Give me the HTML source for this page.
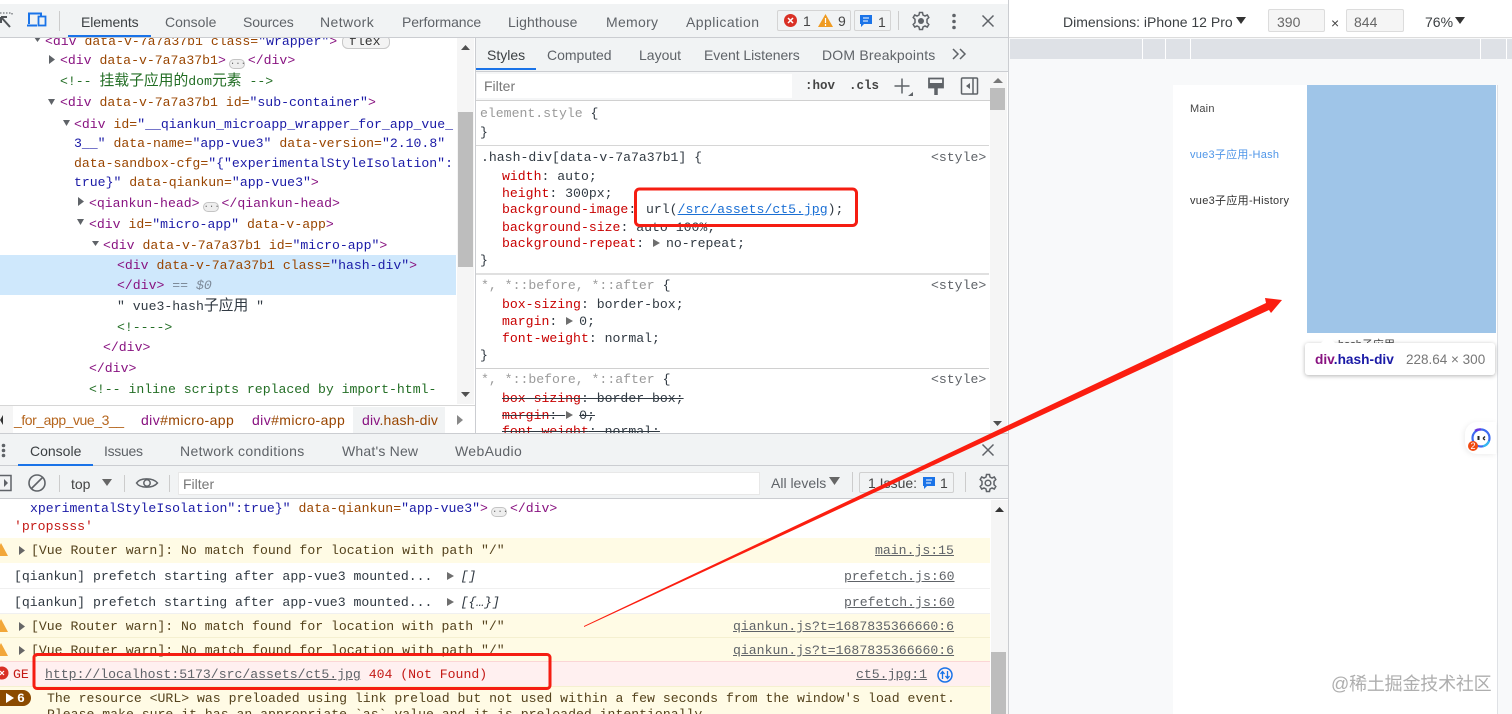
<!DOCTYPE html>
<html><head><meta charset="utf-8"><style>
html,body{margin:0;padding:0;width:1512px;height:714px;overflow:hidden;background:#fff}
#r{position:relative;width:1512px;height:714px;overflow:hidden;background:#fff;font-family:"Liberation Sans","Noto Sans CJK SC",sans-serif;filter:blur(.35px)}
.b{position:absolute}
.m,.s{position:absolute;white-space:pre;line-height:18px;height:18px}
.m{font-family:"Liberation Mono","Noto Sans CJK SC",monospace;font-size:13.17px;color:#303942;margin-top:1px}
.s{font-size:14px;color:#5f6368}
.c{font-size:14.8px;line-height:14px}
.t{color:#881280}.a{color:#994500}.v{color:#1a1aa6}.g{color:#236e25}
.p{color:#c80000}.k{color:#9a9a9a}.l{color:#5f6368;text-decoration:underline}
.x{text-decoration:line-through}
.ar{display:inline-block;width:0;height:0;border-left:7px solid #6e6e6e;border-top:4px solid transparent;border-bottom:4px solid transparent;margin:0 6px 0 1px}
svg{position:absolute;overflow:visible}
.e{display:inline-block;width:14px;height:8px;border:1px solid #c4c4c4;border-radius:5px;background:#eee;vertical-align:0;text-align:center;line-height:4px;font-size:9px;color:#666;margin:0 3px}
.w{color:#54421c}
</style></head><body><div id="r">

<!-- panel backgrounds -->
<div class="b" style="left:0;top:4px;width:1008px;height:33px;background:#f1f3f4;border-bottom:1px solid #cbcdd1"></div>
<div class="b" style="left:476px;top:38px;width:532px;height:33px;background:#f1f3f4;border-bottom:1px solid #cbcdd1"></div>
<div class="b" style="left:1008px;top:0;width:1px;height:714px;background:#cbcdd1"></div>
<div class="b" style="left:475px;top:38px;width:1px;height:396px;background:#cbcdd1"></div>
<div class="b" style="left:0;top:255px;width:456px;height:40px;background:#cfe8fc"></div>
<div class="b" style="left:457px;top:38px;width:17px;height:366px;background:#f5f5f5"></div>
<div class="b" style="left:458px;top:112px;width:15px;height:155px;background:#bdbdbd"></div>
<svg style="left:0;top:0" width="1512" height="714">
<polygon points="461,50 470,50 465.500,45" fill="#505050"/><polygon points="461,392 470,392 465.500,397" fill="#505050"/>
</svg>

<!-- top toolbar -->
<svg style="left:0;top:8px" width="50" height="24" fill="none">
<path d="M0 5H11M12 5V8" stroke="#6e7276" stroke-dasharray="1.500 1.500" stroke-width="1.300"/>
<path d="M1 9L10 19M1 9H7M1 9V15" stroke="#505458" stroke-width="2"/>
<path d="M29 16V5.500H41V8M27 17.500H37" stroke="#1a73e8" stroke-width="2"/>
<rect x="38.500" y="8.500" width="7" height="9" stroke="#1a73e8" stroke-width="1.800"/>
</svg>
<div class="b" style="left:59px;top:11px;width:1px;height:20px;background:#ccc"></div>
<div class="b" style="left:68px;top:35px;width:83px;height:2px;background:#1a73e8"></div>
<div class="s" style="left:81px;top:13px;color:#3c4043;letter-spacing:-.1px">Elements</div>
<div class="s" style="left:165px;top:13px">Console</div>
<div class="s" style="left:243px;top:13px;letter-spacing:-.1px">Sources</div>
<div class="s" style="left:320px;top:13px;letter-spacing:.4px">Network</div>
<div class="s" style="left:402px;top:13px;letter-spacing:-.1px">Performance</div>
<div class="s" style="left:508px;top:13px;letter-spacing:.1px">Lighthouse</div>
<div class="s" style="left:606px;top:13px;letter-spacing:.3px">Memory</div>
<div class="s" style="left:686px;top:13px;letter-spacing:.45px">Application</div>
<div class="b" style="left:777px;top:10px;width:72px;height:19px;border:1px solid #d4d4d4;border-radius:2px"></div>
<div class="b" style="left:854px;top:10px;width:35px;height:19px;border:1px solid #d4d4d4;border-radius:2px"></div>
<div class="b" style="left:784px;top:14px;width:13px;height:13px;border-radius:50%;background:#d93025"></div>
<svg style="left:784px;top:14px" width="13" height="13"><path d="M4 4L9 9M9 4L4 9" stroke="#fff" stroke-width="1.500"/></svg>
<div class="s" style="left:803px;top:12px;color:#444">1</div>
<svg style="left:818px;top:14px" width="15" height="13"><polygon points="7.500,0 15,13 0,13" fill="#ef9b22"/><path d="M7.500 4V9M7.500 10V12" stroke="#fff" stroke-width="1.200"/></svg>
<div class="s" style="left:838px;top:12px;color:#444">9</div>
<svg style="left:860px;top:15px" width="13" height="13"><path d="M0 0H12V9H4L1 12V9H0Z" fill="#1a73e8"/><path d="M3 3H9M3 6H8" stroke="#fff" stroke-width="1"/></svg>
<div class="s" style="left:878px;top:13px;color:#444">1</div>
<div class="b" style="left:898px;top:11px;width:1px;height:19px;background:#ccc"></div>
<svg style="left:911px;top:11px" width="20" height="20" fill="none"><path d="M8.500 1.500H11.500L12 4L14 5L16.300 4L17.800 6.500L16 8.300V11.700L17.800 13.500L16.300 16L14 15L12 16L11.500 18.500H8.500L8 16L6 15L3.700 16L2.200 13.500L4 11.700V8.300L2.200 6.500L3.700 4L6 5L8 4Z" stroke="#5f6368" stroke-width="1.500"/><circle cx="10" cy="10" r="3" fill="#5f6368"/></svg>
<svg style="left:950px;top:13px" width="8" height="18" fill="#5f6368"><circle cx="4" cy="2.500" r="1.800"/><circle cx="4" cy="8.500" r="1.800"/><circle cx="4" cy="14.500" r="1.800"/></svg>
<svg style="left:982px;top:15px" width="12" height="12"><path d="M0.500 0.500L11.500 11.500M11.500 0.500L0.500 11.500" stroke="#5f6368" stroke-width="1.500"/></svg>

<!-- DOM tree -->
<div class="b" style="left:0;top:38px;width:456px;height:366px;overflow:hidden">
<div style="position:absolute;left:0;top:-38px;width:456px;height:450px">
<svg style="left:0;top:0" width="120" height="300" fill="#5f6368">
<polygon points="34,37 41,37 37.500,42"/><polygon points="49,55 49,64 55,59.500"/><polygon points="48,99 55,99 51.500,105"/><polygon points="63,120 70,120 66.500,126"/><polygon points="78,197 78,206 84,201.500"/><polygon points="77,219 84,219 80.500,225"/><polygon points="92,241 99,241 95.500,246"/>
</svg>
<div class="m" style="left:45px;top:32px"><span class="t">&lt;div</span> <span class="a">data-v-7a7a37b1 class=</span><span class="v">"wrapper"</span><span class="t">&gt;</span></div>
<div class="b" style="left:342px;top:35px;width:46px;height:12px;border:1px solid #c8c8c8;border-radius:6px;background:#f3f3f3"></div>
<div class="m" style="left:349px;top:32px;color:#333">flex</div>
<div class="m" style="left:60px;top:51px"><span class="t">&lt;div</span> <span class="a">data-v-7a7a37b1</span><span class="t">&gt;</span><span class="e">...</span><span class="t">&lt;/div&gt;</span></div>
<div class="m g" style="left:60px;top:72px">&lt;!-- <span class="c">挂载子应用的</span>dom<span class="c">元素</span> --&gt;</div>
<div class="m" style="left:60px;top:93px"><span class="t">&lt;div</span> <span class="a">data-v-7a7a37b1 id=</span><span class="v">"sub-container"</span><span class="t">&gt;</span></div>
<div class="m" style="left:74px;top:115px"><span class="t">&lt;div</span> <span class="a">id=</span><span class="v">"__qiankun_microapp_wrapper_for_app_vue_</span></div>
<div class="m" style="left:74px;top:134px"><span class="v">3__"</span> <span class="a">data-name=</span><span class="v">"app-vue3"</span> <span class="a">data-version=</span><span class="v">"2.10.8"</span></div>
<div class="m" style="left:74px;top:154px"><span class="a">data-sandbox-cfg=</span><span class="v">"{"experimentalStyleIsolation":</span></div>
<div class="m" style="left:74px;top:173px"><span class="v">true}"</span> <span class="a">data-qiankun=</span><span class="v">"app-vue3"</span><span class="t">&gt;</span></div>
<div class="m" style="left:89px;top:194px"><span class="t">&lt;qiankun-head&gt;</span><span class="e">...</span><span class="t">&lt;/qiankun-head&gt;</span></div>
<div class="m" style="left:89px;top:215px"><span class="t">&lt;div</span> <span class="a">id=</span><span class="v">"micro-app"</span> <span class="a">data-v-app</span><span class="t">&gt;</span></div>
<div class="m" style="left:103px;top:236px"><span class="t">&lt;div</span> <span class="a">data-v-7a7a37b1 id=</span><span class="v">"micro-app"</span><span class="t">&gt;</span></div>
<div class="m" style="left:117px;top:256px"><span class="t">&lt;div</span> <span class="a">data-v-7a7a37b1 class=</span><span class="v">"hash-div"</span><span class="t">&gt;</span></div>
<div class="m" style="left:117px;top:276px"><span class="t">&lt;/div&gt;</span> <span style="color:#7d8a99">== <i>$0</i></span></div>
<div class="m" style="left:117px;top:297px">" vue3-hash<span class="c">子应用</span> "</div>
<div class="m g" style="left:117px;top:318px">&lt;!----&gt;</div>
<div class="m t" style="left:103px;top:338px">&lt;/div&gt;</div>
<div class="m t" style="left:89px;top:359px">&lt;/div&gt;</div>
<div class="m g" style="left:89px;top:380px">&lt;!-- inline scripts replaced by import-html-</div>
</div></div>

<!-- Breadcrumbs -->
<div class="b" style="left:0;top:405px;width:475px;height:28px;background:#fff;border-top:1px solid #d6d6d6;box-sizing:border-box"></div>
<div class="b" style="left:353px;top:407px;width:92px;height:26px;background:#f1f3f4"></div>
<div class="b" style="left:0;top:406px;width:13px;height:27px;background:#f5f5f5"></div>
<svg style="left:0;top:415px" width="3" height="10"><polygon points="3,0 3,10 0,5" fill="#333"/></svg>
<div class="s" style="left:14px;top:411px;color:#b5651d;letter-spacing:-.45px">_for_app_vue_3__</div>
<div class="s" style="left:141px;top:411px;letter-spacing:.4px"><span class="t">div</span><span class="a">#micro-app</span></div>
<div class="s" style="left:252px;top:411px;letter-spacing:.4px"><span class="t">div</span><span class="a">#micro-app</span></div>
<div class="s" style="left:362px;top:411px;letter-spacing:.2px"><span class="t">div</span><span class="a">.hash-div</span></div>
<svg style="left:457px;top:415px" width="7" height="10"><polygon points="0,0 6,5 0,10" fill="#888"/></svg>

<!-- Styles sidebar -->
<div class="s" style="left:487px;top:46px;color:#3c4043">Styles</div>
<div class="b" style="left:476px;top:68px;width:60px;height:2px;background:#1a73e8"></div>
<div class="s" style="left:547px;top:46px">Computed</div>
<div class="s" style="left:639px;top:46px">Layout</div>
<div class="s" style="left:704px;top:46px;letter-spacing:-.05px">Event Listeners</div>
<div class="s" style="left:822px;top:46px;letter-spacing:.2px">DOM Breakpoints</div>
<svg style="left:952px;top:48px" width="16" height="12" fill="none"><path d="M1 1L6 6L1 11M8 1L13 6L8 11" stroke="#5f6368" stroke-width="1.500"/></svg>
<div class="b" style="left:476px;top:72px;width:514px;height:29px;background:#f5f6f7;border-bottom:1px solid #d0d0d0;box-sizing:border-box"></div>
<div class="b" style="left:477px;top:74px;width:315px;height:24px;background:#fff"></div>
<div class="s" style="left:484px;top:77px;color:#777">Filter</div>
<div class="m" style="left:805px;top:76px;font-weight:bold;color:#444;font-size:12.500px">:hov</div>
<div class="m" style="left:849px;top:76px;font-weight:bold;color:#444;font-size:12.500px">.cls</div>
<svg style="left:893px;top:76px" width="90" height="22" fill="none">
<path d="M9 2.500V17.500M1.500 10H16.500" stroke="#5f6368" stroke-width="1.500"/><polygon points="20,16 20,20 15,20" fill="#5f6368"/>
<path d="M36 2.500H50V11.500H36Z" stroke="#5f6368" stroke-width="1.800"/><path d="M36 9H50" stroke="#5f6368" stroke-width="4"/><path d="M43 11V19" stroke="#5f6368" stroke-width="3.500"/>
<rect x="68.500" y="2" width="16" height="16" rx="1" stroke="#5f6368" stroke-width="1.500"/><path d="M80 2V18" stroke="#5f6368" stroke-width="1.500"/><polygon points="77,7 77,13 73,10" fill="#5f6368"/>
</svg>

<div class="b" style="left:476px;top:145px;width:513px;height:1px;background:#d6d6d6"></div>
<div class="b" style="left:476px;top:273px;width:513px;height:2px;background:#e0e0e0"></div>
<div class="b" style="left:476px;top:368px;width:513px;height:1px;background:#d0d0d0"></div>
<div class="b" style="left:990px;top:72px;width:17px;height:362px;background:#f5f5f5"></div>
<div class="b" style="left:990px;top:88px;width:15px;height:22px;background:#bdbdbd"></div>
<svg style="left:990px;top:76px" width="16" height="360"><polygon points="3,7 13,7 8,2" fill="#777"/><polygon points="3,345 12,345 7.500,350" fill="#505050"/></svg>

<div class="m k" style="left:480px;top:104px">element.style <span style="color:#303942">{</span></div>
<div class="m" style="left:480px;top:123px">}</div>
<div class="m" style="left:481px;top:148px">.hash-div[data-v-7a7a37b1] {</div>
<div class="m k" style="left:931px;top:148px;color:#5f6368">&lt;style&gt;</div>
<div class="m" style="left:502px;top:167px"><span class="p">width</span>: auto;</div>
<div class="m" style="left:502px;top:184px"><span class="p">height</span>: 300px;</div>
<div class="m" style="left:502px;top:200px"><span class="p">background-image</span>:</div>
<div class="m" style="left:646px;top:200px">url(<span style="color:#1a6fd4;text-decoration:underline">/src/assets/ct5.jpg</span>);</div>
<div class="m" style="left:502px;top:218px"><span class="p">background-size</span>: auto 100%;</div>
<div class="m" style="left:502px;top:234px"><span class="p">background-repeat</span>: <span class="ar"></span>no-repeat;</div>
<div class="m" style="left:480px;top:251px">}</div>
<div class="m k" style="left:481px;top:276px">*, *::before, *::after <span style="color:#303942">{</span></div>
<div class="m" style="left:931px;top:276px;color:#5f6368">&lt;style&gt;</div>
<div class="m" style="left:502px;top:295px"><span class="p">box-sizing</span>: border-box;</div>
<div class="m" style="left:502px;top:312px"><span class="p">margin</span>: <span class="ar"></span>0;</div>
<div class="m" style="left:502px;top:329px"><span class="p">font-weight</span>: normal;</div>
<div class="m" style="left:480px;top:346px">}</div>
<div class="m k" style="left:481px;top:370px">*, *::before, *::after <span style="color:#303942">{</span></div>
<div class="m" style="left:931px;top:370px;color:#5f6368">&lt;style&gt;</div>
<div class="m x" style="left:502px;top:389px"><span class="p">box-sizing</span>: border-box;</div>
<div class="m x" style="left:502px;top:406px"><span class="p">margin</span>: <span class="ar"></span>0;</div>
<div class="b" style="left:476px;top:423px;width:513px;height:10px;overflow:hidden"><div class="m x" style="left:26px;top:-1px"><span class="p">font-weight</span>: normal;</div></div>

<!-- Drawer tabs -->
<div class="b" style="left:0;top:433px;width:1008px;height:33px;background:#f1f3f4;border-top:1px solid #cbcdd1;border-bottom:1px solid #cbcdd1;box-sizing:border-box"></div>
<svg style="left:0;top:443px" width="7" height="16" fill="#5f6368"><circle cx="3.500" cy="2.500" r="1.800"/><circle cx="3.500" cy="7.500" r="1.800"/><circle cx="3.500" cy="12.500" r="1.800"/></svg>
<div class="s" style="left:30px;top:442px;color:#3c4043">Console</div>
<div class="b" style="left:18px;top:464px;width:75px;height:2px;background:#1a73e8"></div>
<div class="s" style="left:104px;top:442px;letter-spacing:-.3px">Issues</div>
<div class="s" style="left:180px;top:442px;letter-spacing:.35px">Network conditions</div>
<div class="s" style="left:342px;top:442px;letter-spacing:.2px">What's New</div>
<div class="s" style="left:455px;top:442px;letter-spacing:.35px">WebAudio</div>
<svg style="left:982px;top:444px" width="12" height="12"><path d="M0.500 0.500L11.500 11.500M11.500 0.500L0.500 11.500" stroke="#5f6368" stroke-width="1.500"/></svg>

<!-- Console toolbar -->
<div class="b" style="left:0;top:466px;width:1008px;height:33px;background:#f1f3f4;border-bottom:1px solid #cbcdd1;box-sizing:border-box"></div>
<svg style="left:0;top:472px" width="180" height="24" fill="none">
<path d="M0 3.500H11V18.500H0" stroke="#5f6368" stroke-width="1.500"/><polygon points="4,7 4,15 8,11" fill="#5f6368"/>
<circle cx="37" cy="11" r="8" stroke="#5f6368" stroke-width="1.600"/><path d="M31.500 16.500L42.500 5.500" stroke="#5f6368" stroke-width="1.600"/>
<path d="M59.500 3V20M124.500 3V20M169.500 3V20" stroke="#ccc"/>
<polygon points="102,7 112,7 107,14" fill="#666"/>
<path d="M136.500 11C140 5.500 153 5.500 157.500 11C153 16.500 140 16.500 136.500 11Z" stroke="#5f6368" stroke-width="1.500"/><circle cx="147" cy="11" r="3.200" stroke="#5f6368" stroke-width="1.500"/>
</svg>
<div class="s" style="left:71px;top:475px;color:#444">top</div>
<div class="b" style="left:178px;top:472px;width:582px;height:23px;background:#fff;border:1px solid #e8e8e8;box-sizing:border-box"></div>
<div class="s" style="left:183px;top:475px;color:#777">Filter</div>
<div class="s" style="left:771px;top:474px">All levels</div>
<svg style="left:829px;top:477px" width="12" height="9"><polygon points="0,0 11,0 5.500,8" fill="#666"/></svg>
<div class="b" style="left:852px;top:472px;width:1px;height:20px;background:#ccc"></div>
<div class="b" style="left:859px;top:472px;width:93px;height:19px;border:1px solid #d0d0d0;border-radius:2px"></div>
<div class="s" style="left:868px;top:474px;color:#444">1 Issue:</div>
<svg style="left:923px;top:477px" width="13" height="13"><path d="M0 0H12V9H4L1 12V9H0Z" fill="#1a73e8"/><path d="M3 3H9M3 6H8" stroke="#fff" stroke-width="1"/></svg>
<div class="s" style="left:940px;top:474px;color:#444">1</div>
<div class="b" style="left:965px;top:472px;width:1px;height:20px;background:#ccc"></div>
<svg style="left:978px;top:473px" width="20" height="20" fill="none"><path d="M8.500 1.500H11.500L12 4L14 5L16.300 4L17.800 6.500L16 8.300V11.700L17.800 13.500L16.300 16L14 15L12 16L11.500 18.500H8.500L8 16L6 15L3.700 16L2.200 13.500L4 11.700V8.300L2.200 6.500L3.700 4L6 5L8 4Z" stroke="#5f6368" stroke-width="1.500"/><circle cx="10" cy="10" r="2.800" stroke="#5f6368" stroke-width="1.500"/></svg>

<!-- Console rows -->
<div class="b" style="left:0;top:538px;width:990px;height:25px;background:#fffbe5"></div>
<div class="b" style="left:0;top:563px;width:990px;height:26px;border-bottom:1px solid #f0f0f0;box-sizing:border-box"></div>
<div class="b" style="left:0;top:589px;width:990px;height:25px;border-bottom:1px solid #f0f0f0;box-sizing:border-box"></div>
<div class="b" style="left:0;top:614px;width:990px;height:24px;background:#fffbe5;border-bottom:1px solid #f5f0d0;box-sizing:border-box"></div>
<div class="b" style="left:0;top:638px;width:990px;height:23px;background:#fffbe5"></div>
<div class="b" style="left:0;top:661px;width:990px;height:25px;background:#fff0f0;border-top:1px solid #fbd6d6;box-sizing:border-box"></div>
<div class="b" style="left:0;top:686px;width:990px;height:28px;background:#fffbe5;border-top:1px solid #f5f0d0;box-sizing:border-box"></div>
<div class="b" style="left:991px;top:500px;width:17px;height:214px;background:#f5f5f5"></div>
<div class="b" style="left:991px;top:652px;width:15px;height:62px;background:#bdbdbd"></div>
<svg style="left:994px;top:506px" width="12" height="7"><polygon points="1,6 10,6 5.500,1" fill="#333"/></svg>

<div class="m" style="left:30px;top:499px"><span class="v">xperimentalStyleIsolation":true}"</span> <span class="a">data-qiankun=</span><span class="v">"app-vue3"</span><span class="t">&gt;</span><span class="e">...</span><span class="t">&lt;/div&gt;</span></div>
<div class="m" style="left:14px;top:517px;color:#c41a16">'propssss'</div>
<svg style="left:0;top:0" width="40" height="714">
<g fill="#f2a73a"><polygon points="-6,556 8,556 1,543"/><polygon points="-6,632 8,632 1,619"/><polygon points="-6,656 8,656 1,643"/></g>
<g fill="#666"><polygon points="19,546 19,555 25,550.500"/><polygon points="19,622 19,631 25,626.500"/><polygon points="19,646 19,655 25,650.500"/></g>
<circle cx="2" cy="673" r="6.500" fill="#d93025"/>
<path d="M0 671L4 675M4 671L0 675" stroke="#fff" stroke-width="1.200"/>
</svg>
<div class="m w" style="left:31px;top:541px">[Vue Router warn]: No match found for location with path "/"</div>
<div class="m l" style="left:875px;top:541px">main.js:15</div>
<div class="m" style="left:14px;top:567px">[qiankun] prefetch starting after app-vue3 mounted...<span class="ar" style="margin-left:15px"></span><i>[]</i></div>
<div class="m l" style="left:844px;top:567px">prefetch.js:60</div>
<div class="m" style="left:14px;top:593px">[qiankun] prefetch starting after app-vue3 mounted...<span class="ar" style="margin-left:15px"></span><i>[{…}]</i></div>
<div class="m l" style="left:844px;top:593px">prefetch.js:60</div>
<div class="m w" style="left:31px;top:617px">[Vue Router warn]: No match found for location with path "/"</div>
<div class="m l" style="left:733px;top:617px">qiankun.js?t=1687835366660:6</div>
<div class="m w" style="left:31px;top:641px">[Vue Router warn]: No match found for location with path "/"</div>
<div class="m l" style="left:733px;top:641px">qiankun.js?t=1687835366660:6</div>
<div class="m" style="left:13px;top:665px;color:#c41a16">GE</div>
<div class="m" style="left:45px;top:665px;color:#c41a16"><span class="l">http://localhost:5173/src/assets/ct5.jpg</span> 404 (Not Found)</div>
<div class="m l" style="left:856px;top:665px">ct5.jpg:1</div>
<svg style="left:937px;top:667px" width="16" height="16" fill="none"><circle cx="8" cy="8" r="7" stroke="#1a73e8" stroke-width="1.500"/><path d="M5.500 12V5M3.500 7L5.500 4.500L7.500 7M10.500 4V11M8.500 9L10.500 11.500L12.500 9" stroke="#1a73e8" stroke-width="1.300"/></svg>
<div class="b" style="left:0;top:690px;width:31px;height:16px;background:#8b4a00;border-radius:0 8px 8px 0"></div>
<svg style="left:6px;top:693px" width="9" height="10"><polygon points="0,0 8,5 0,10" fill="#fff"/></svg>
<div class="m" style="left:17px;top:689px;color:#fff;font-weight:bold">6</div>
<div class="m w" style="left:47px;top:689px">The resource &lt;URL&gt; was preloaded using link preload but not used within a few seconds from the window's load event.</div>
<div class="m w" style="left:47px;top:705px">Please make sure it has an appropriate `as` value and it is preloaded intentionally.</div>

<!-- Device pane -->
<div class="b" style="left:1009px;top:38px;width:503px;height:676px;background:#f8f9fa"></div>
<div class="b" style="left:1009px;top:37px;width:503px;height:1px;background:#dcdcdc"></div>
<div class="b" style="left:1010px;top:39px;width:502px;height:20px;background:#dee1e6"></div>
<div class="b" style="left:1142px;top:39px;width:1px;height:20px;background:#fff"></div>
<div class="b" style="left:1165px;top:39px;width:1px;height:20px;background:#fff"></div>
<div class="b" style="left:1190px;top:39px;width:1px;height:20px;background:#fff"></div>
<div class="b" style="left:1480px;top:39px;width:1px;height:20px;background:#fff"></div>
<div class="b" style="left:1506px;top:39px;width:1px;height:20px;background:#fff"></div>
<div class="s" style="left:1063px;top:13px;color:#3c4043">Dimensions: iPhone 12 Pro</div>
<svg style="left:1236px;top:17px" width="11" height="9"><polygon points="0,0 10,0 5,7" fill="#333"/></svg>
<div class="b" style="left:1268px;top:9px;width:57px;height:23px;background:#f5f5f5;border:1px solid #dcdcdc;border-radius:2px;box-sizing:border-box"></div>
<div class="s" style="left:1277px;top:13px;color:#666">390</div>
<div class="s" style="left:1331px;top:14px;color:#444">×</div>
<div class="b" style="left:1346px;top:9px;width:58px;height:23px;background:#f5f5f5;border:1px solid #dcdcdc;border-radius:2px;box-sizing:border-box"></div>
<div class="s" style="left:1354px;top:13px;color:#666">844</div>
<div class="s" style="left:1425px;top:13px;color:#3c4043">76%</div>
<svg style="left:1455px;top:17px" width="11" height="9"><polygon points="0,0 10,0 5,7" fill="#333"/></svg>

<!-- viewport -->
<div class="b" style="left:1173px;top:85px;width:325px;height:629px;background:#fff;border-right:1px solid #dfe1e5;box-sizing:border-box"></div>
<div class="b" style="left:1307px;top:85px;width:189px;height:248px;background:#9fc5e8"></div>
<div class="s" style="left:1190px;top:100px;font-size:11px;color:#444;letter-spacing:.2px">Main</div>
<div class="s" style="left:1190px;top:146px;font-size:11px;color:#4f96e8;letter-spacing:.25px">vue3子应用-Hash</div>
<div class="s" style="left:1190px;top:192px;font-size:11px;color:#333;letter-spacing:.3px">vue3子应用-History</div>
<div class="b" style="left:1330px;top:337px;width:100px;height:6px;overflow:hidden"><div class="s" style="left:8px;top:-1px;font-size:11px;color:#444">hash子应用</div></div>
<!-- tooltip -->
<div class="b" style="left:1305px;top:343px;width:190px;height:32px;background:#fff;border-radius:3px;box-shadow:0 1px 4px rgba(0,0,0,.3)"></div>
<svg style="left:1320px;top:336px" width="18" height="8"><polygon points="0,8 8,0 16,8" fill="#fff"/></svg>
<div class="s" style="left:1315px;top:351px;font-size:13.700px;font-weight:bold"><span style="color:#881280">div</span><span style="color:#1a1aa6">.hash-div</span></div>
<div class="s" style="left:1406px;top:351px;font-size:13.500px;color:#777">228.64 × 300</div>
<!-- chat widget -->
<div class="b" style="left:1465px;top:422px;width:31px;height:32px;background:#fff;border-radius:12px 0 0 12px;box-shadow:-1px 1px 6px rgba(0,0,0,.08)"></div>
<svg style="left:1470px;top:427px" width="24" height="26" fill="none">
<circle cx="11" cy="11" r="8.500" stroke="#3d6bf0" stroke-width="2.200"/>
<path d="M5 3.800A8.500 8.500 0 0 1 11 2.500" stroke="#6a35e0" stroke-width="2.200"/>
<path d="M19 14A8.500 8.500 0 0 1 13 19.300" stroke="#35b8f0" stroke-width="2.200"/>
<rect x="7.500" y="9" width="2" height="4" fill="#222"/><path d="M13 11.500L15 9.500M13 11.500L15 13" stroke="#222" stroke-width="1.300"/>
<circle cx="3" cy="19" r="5" fill="#f04a12"/></svg>
<div class="s" style="left:1470.500px;top:437px;font-size:9px;color:#fff">2</div>
<!-- watermark -->
<div class="s" style="left:1331px;top:673px;font-size:18px;line-height:22px;height:22px;color:#aeaeae;letter-spacing:-.2px">@稀土掘金技术社区</div>

<!-- annotations -->
<svg style="left:0;top:0" width="1512" height="714" fill="none">
<rect x="635.500" y="189" width="221" height="36.500" rx="4" stroke="#f51d12" stroke-width="3"/>
<rect x="34" y="654.500" width="516" height="34" rx="3" stroke="#f51d12" stroke-width="3"/>
<polygon points="584,626 1266,303 1265,298 1282,300 1271,313 1269,310 584,627" fill="#fb1e10"/>
</svg>
</div></body></html>
